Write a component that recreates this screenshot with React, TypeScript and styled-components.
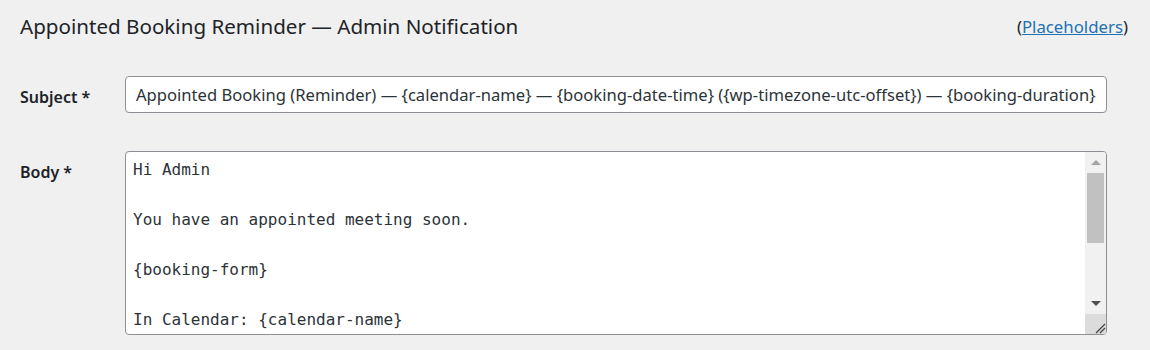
import React from 'react';
import styled, { createGlobalStyle } from 'styled-components';

const GlobalStyle = createGlobalStyle`
  html, body { margin: 0; padding: 0; background: #f0f0f1; }
  body { font-family: "Noto Sans", "Open Sans", sans-serif; color: #1d2327; }
`;

const Page = styled.div`
  width: 1150px; height: 350px; box-sizing: border-box;
  padding: 11px 22px 0 20px; overflow: hidden;
`;

const Header = styled.div`
  display: flex; align-items: center; justify-content: space-between;
  height: 30px;
`;

const Title = styled.h2`
  margin: 0; font-size: 20.6px; font-weight: 400; color: #1d2327;
`;

const Help = styled.span`
  font-size: 16.8px; color: #1d2327;
  a { color: #2271b1; text-decoration: underline; }
`;

const Form = styled.div`
  display: grid; grid-template-columns: 105px 982px;
  row-gap: 35px; margin-top: 35px;
`;

const Label = styled.label`
  font-size: 16px; font-weight: 600; color: #1d2327; line-height: 37px; padding-top: 3px;
`;

const Input = styled.div`
  height: 37px; box-sizing: border-box; border: 1px solid #8c8f94; border-radius: 4px;
  background: #fff; padding: 0 10px; display: flex; align-items: center;
  font-size: 16.6px; color: #2c3338; white-space: nowrap; overflow: hidden;
`;

const Area = styled.div`
  height: 184px; box-sizing: border-box; border: 1px solid #8c8f94; border-radius: 4px;
  background: #fff; display: flex; overflow: hidden;
`;

const AreaText = styled.div`
  flex: 1; padding: 5px 7px; white-space: pre-wrap;
  font-family: "DejaVu Sans Mono", "Liberation Mono", monospace; font-size: 16px;
  line-height: 25px; color: #2c3338; overflow: hidden;
`;

const Scrollbar = styled.div`
  width: 21px; background: #f1f1f1; display: flex; flex-direction: column;
`;

const Arrow = styled.div<{ $down?: boolean; $dim?: boolean }>`
  height: 21px; display: flex; align-items: center; justify-content: center;
  &::after {
    content: ''; width: 0; height: 0;
    border-left: 5px solid transparent; border-right: 5px solid transparent;
    ${p => p.$down ? 'border-top: 5px solid' : 'border-bottom: 5px solid'} ${p => p.$dim ? '#a3a3a3' : '#505050'};
  }
`;

const Track = styled.div`
  flex: 1; padding: 0 2px;
`;

const Thumb = styled.div`
  height: 70px; background: #c1c1c1;
`;

const Resizer = styled.div`
  height: 20px; background: #dcdcdc; display: flex; align-items: flex-end; justify-content: flex-end;
`;

const body = `Hi Admin

You have an appointed meeting soon.

{booking-form}

In Calendar: {calendar-name}`;

export default function App() {
  return (
    <Page>
      <GlobalStyle />
      <Header>
        <Title>Appointed Booking Reminder — Admin Notification</Title>
        <Help>(<a href="#">Placeholders</a>)</Help>
      </Header>
      <Form>
        <Label>Subject *</Label>
        <Input>Appointed Booking (Reminder) — {'{calendar-name}'} — {'{booking-date-time}'} ({'{wp-timezone-utc-offset}'}) — {'{booking-duration}'}</Input>
        <Label>Body *</Label>
        <Area>
          <AreaText>{body}</AreaText>
          <Scrollbar>
            <Arrow $dim />
            <Track><Thumb /></Track>
            <Arrow $down />
            <Resizer>
              <svg width="12" height="12" viewBox="0 0 12 12">
                <path d="M2 11 L11 2 M6 11 L11 6" stroke="#444" strokeWidth="1.3" />
              </svg>
            </Resizer>
          </Scrollbar>
        </Area>
      </Form>
    </Page>
  );
}
